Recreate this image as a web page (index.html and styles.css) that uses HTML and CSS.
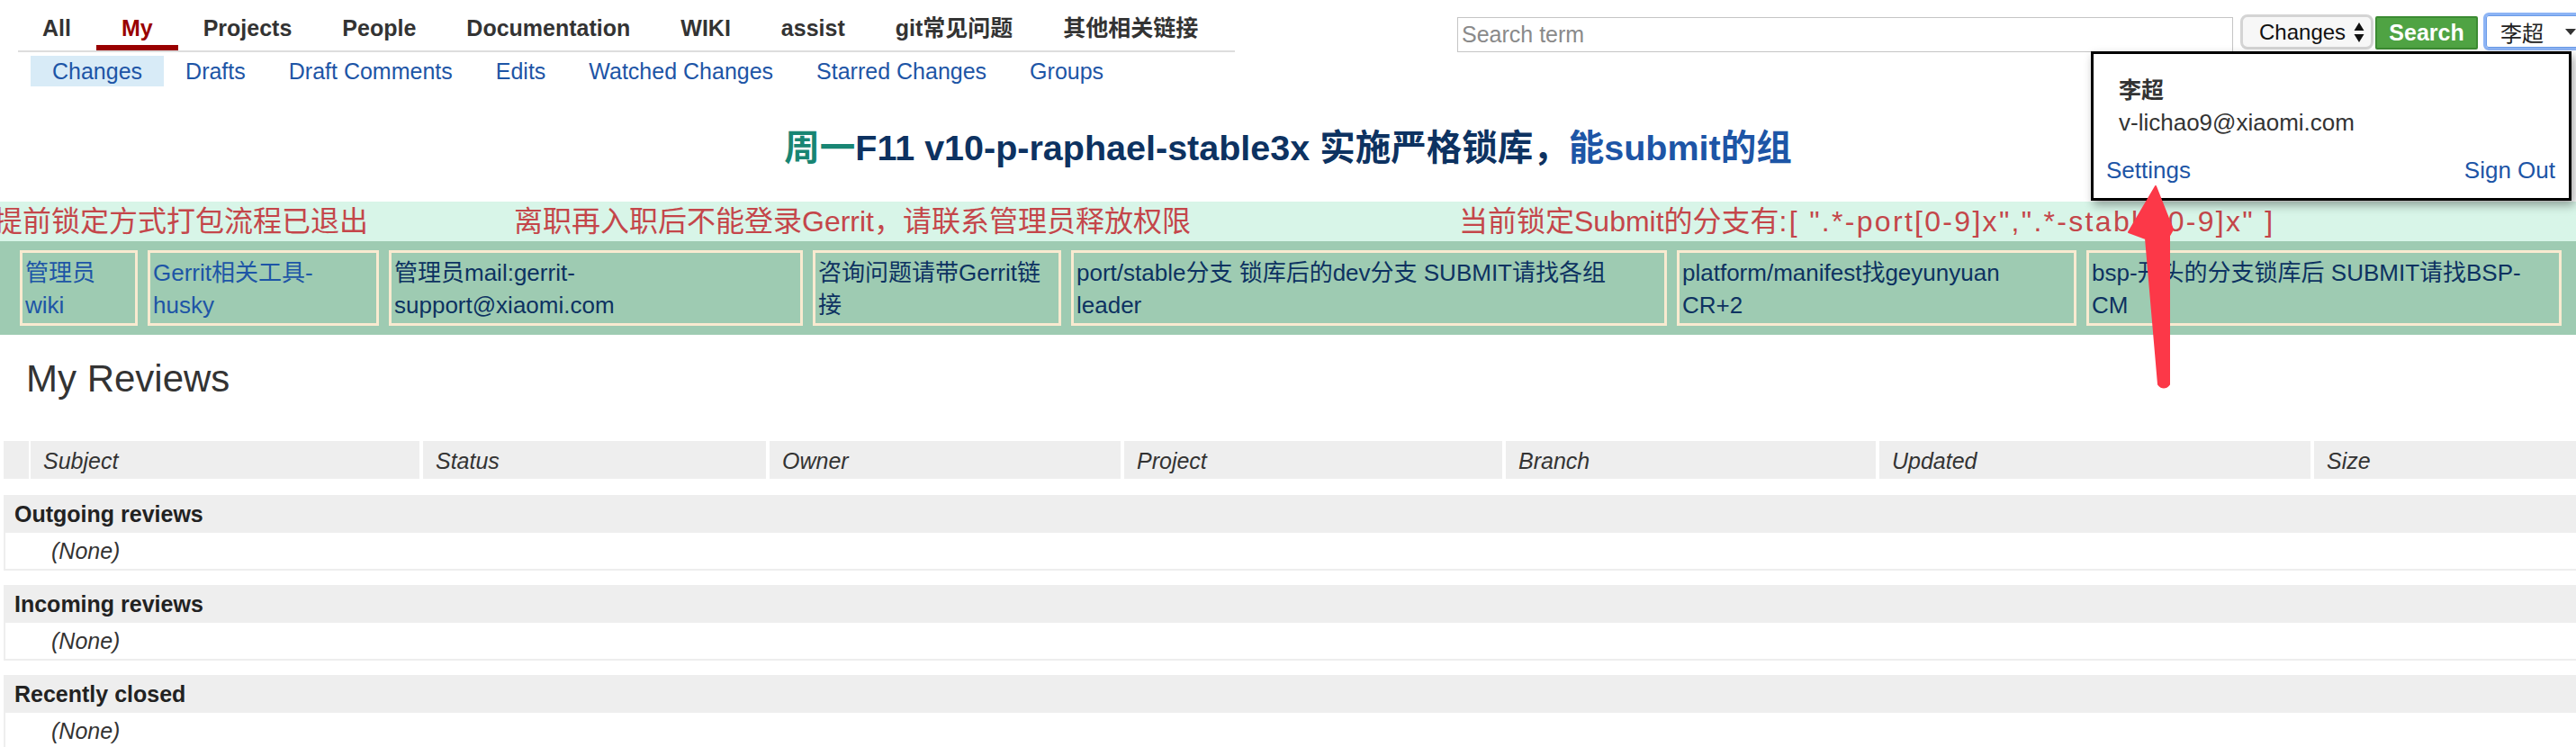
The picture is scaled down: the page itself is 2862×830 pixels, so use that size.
FILE: index.html
```html
<!DOCTYPE html>
<html lang="zh">
<head>
<meta charset="utf-8">
<title>My Reviews</title>
<link rel="stylesheet" href="styles.css">
</head>
<body>
<header class="topbar">
  <nav class="nav">
    <ul class="menu">
      <li class="menu-item">All</li>
      <li class="menu-item active">My</li>
      <li class="menu-item">Projects</li>
      <li class="menu-item">People</li>
      <li class="menu-item">Documentation</li>
      <li class="menu-item">WIKI</li>
      <li class="menu-item">assist</li>
      <li class="menu-item">git常见问题</li>
      <li class="menu-item">其他相关链接</li>
    </ul>
    <ul class="submenu">
      <li class="sub-item current">Changes</li>
      <li class="sub-item">Drafts</li>
      <li class="sub-item">Draft Comments</li>
      <li class="sub-item">Edits</li>
      <li class="sub-item">Watched Changes</li>
      <li class="sub-item">Starred Changes</li>
      <li class="sub-item">Groups</li>
    </ul>
  </nav>
  <div class="search">
    <input class="search-input" type="text" placeholder="Search term">
    <div class="select">Changes<svg class="updown" width="12" height="22" viewBox="0 0 12 22"><path d="M6 0 L11.5 9 L0.5 9 Z M0.5 13 L11.5 13 L6 22 Z" fill="#111"/></svg></div>
    <button class="search-btn">Search</button>
    <div class="user-btn">李超<svg class="caret" width="12" height="7" viewBox="0 0 12 7"><path d="M0 0 L12 0 L6 7 Z" fill="#333"/></svg></div>
  </div>
</header>

<div class="title"><span class="t-teal">周一</span>F11 v10-p-raphael-stable3x 实施严格锁库，<span class="t-blue">能submit的组</span></div>

<div class="marquee">
  <span class="mq mq1">提前锁定方式打包流程已退出</span>
  <span class="mq mq2">离职再入职后不能登录Gerrit，请联系管理员释放权限</span>
  <span class="mq mq3">当前锁定Submit的分支有<span class="mq-code">:[ ".*-port[0-9]x",".*-stable[0-9]x" ]</span></span>
</div>

<div class="links">
  <div class="cell w1"><a class="lnk">管理员<br>wiki</a></div>
  <div class="cell w2"><a class="lnk">Gerrit相关工具-<br>husky</a></div>
  <div class="cell w3">管理员mail:gerrit-<br>support@xiaomi.com</div>
  <div class="cell w4">咨询问题请带Gerrit链<br>接</div>
  <div class="cell w5">port/stable分支 锁库后的dev分支 SUBMIT请找各组<br>leader</div>
  <div class="cell w6">platform/manifest找geyunyuan<br>CR+2</div>
  <div class="cell w7">bsp-开头的分支锁库后 SUBMIT请找BSP-<br>CM</div>
</div>

<h1 class="heading">My Reviews</h1>

<div class="changes">
  <div class="thead">
    <div class="th"></div>
    <div class="th">Subject</div>
    <div class="th">Status</div>
    <div class="th">Owner</div>
    <div class="th">Project</div>
    <div class="th">Branch</div>
    <div class="th">Updated</div>
    <div class="th">Size</div>
  </div>
  <div class="section">
    <div class="sec-head">Outgoing reviews</div>
    <div class="sec-none">(None)</div>
  </div>
  <div class="section">
    <div class="sec-head">Incoming reviews</div>
    <div class="sec-none">(None)</div>
  </div>
  <div class="section">
    <div class="sec-head">Recently closed</div>
    <div class="sec-none">(None)</div>
  </div>
</div>

<div class="dropdown">
  <div class="dd-name">李超</div>
  <div class="dd-email">v-lichao9@xiaomi.com</div>
  <div class="dd-actions"><a class="dd-link">Settings</a><a class="dd-link">Sign Out</a></div>
</div>

<svg class="arrow" width="80" height="240" viewBox="0 0 80 240">
  <path d="M45 7 L15 58 L34 65 L48 227 Q54 234 60 227 L60 62 L64 55 Z" fill="#fc3848" stroke="#fc3848" stroke-width="2" stroke-linejoin="round"/>
</svg>
</body>
</html>
```

FILE: styles.css
```css
* { box-sizing: border-box; }
html, body { margin: 0; padding: 0; }
body {
  position: relative;
  width: 2862px;
  height: 830px;
  overflow: hidden;
  background: #fff;
  color: #333;
  font-family: "Liberation Sans", "Noto Sans CJK SC", sans-serif;
}

/* top bar */
.topbar { display: flex; height: 96px; }
.nav { flex: 0 0 1619px; }
.menu {
  list-style: none;
  margin: 0 0 0 20px;
  padding: 12px 0 0;
  width: 1352px;
  display: flex;
  border-bottom: 2px solid #ddd;
}
.menu-item {
  padding: 0 28px;
  font-size: 25px;
  font-weight: bold;
  line-height: 38px;
  color: #333;
  border-bottom: 6px solid transparent;
  white-space: nowrap;
}
.menu-item:first-child { padding-left: 27px; }
.menu-item.active { color: #990000; border-bottom-color: #990000; }

.submenu {
  list-style: none;
  margin: 4px 0 0 34px;
  padding: 0;
  display: flex;
}
.sub-item {
  padding: 0 24px;
  font-size: 25px;
  line-height: 34px;
  color: #1d55a6;
  white-space: nowrap;
}
.sub-item.current { background: #d8ebf7; }

.search { display: flex; align-items: flex-start; flex: 0 0 auto; }
.search-input {
  margin: 19px 0 0;
  width: 862px;
  height: 39px;
  border: 1px solid #c5c5c5;
  padding: 0 4px;
  font-family: "Liberation Sans", sans-serif;
  font-size: 25px;
  color: #333;
  outline: none;
}
.search-input::placeholder { color: #8a8a8a; }
.select {
  margin: 16px 0 0 8px;
  width: 148px;
  height: 39px;
  border: 3px solid #d4d4d4;
  border-radius: 8px;
  background: #f7f7f7;
  display: flex;
  align-items: center;
  padding-left: 18px;
  gap: 9px;
  font-size: 24px;
  color: #111;
}
.search-btn {
  margin: 18px 0 0 2px;
  width: 114px;
  height: 37px;
  border: 2px solid #3b8b32;
  border-radius: 2px;
  background: #4fa343;
  color: #fff;
  font-family: "Liberation Sans", sans-serif;
  font-size: 25px;
  font-weight: bold;
  padding: 0;
}
.user-btn {
  margin: 14px 0 0 6px;
  width: 110px;
  height: 42px;
  border: 3px solid #8db4f5;
  border-radius: 6px;
  background: #fff;
  box-shadow: inset 0 0 0 1px #6a9be8;
  display: flex;
  align-items: center;
  padding-left: 16px;
  font-size: 24px;
  color: #222;
}
.caret { margin-left: 24px; }

/* title */
.title {
  margin-top: 43px;
  text-align: center;
  font-size: 39.5px;
  font-weight: bold;
  line-height: 50px;
  color: #0d3261;
  white-space: nowrap;
}
.t-teal { color: #188573; }
.t-blue { color: #1d55a6; }

/* marquee */
.marquee {
  margin-top: 35px;
  height: 44px;
  background: #d8f5e8;
  display: flex;
  align-items: center;
  font-size: 32px;
  line-height: 44px;
  color: #c4464a;
  white-space: nowrap;
  overflow: hidden;
}
.mq1 { flex: 0 0 578px; margin-left: -7px; }
.mq2 { flex: 0 0 1050px; }
.mq3 { flex: 0 0 auto; }
.mq-code { letter-spacing: 2.3px; }

/* links band */
.links {
  height: 104px;
  background: #9ecbb2;
  padding: 10px 0 0 22px;
  display: flex;
  align-items: flex-start;
  gap: 11px;
}
.cell {
  flex: 0 0 auto;
  height: 84px;
  border: 3px solid #f9ead0;
  padding: 4px 3px 0;
  font-size: 26px;
  line-height: 36px;
  color: #0d3261;
  white-space: nowrap;
  overflow: hidden;
}
.lnk { color: #1d55a6; text-decoration: none; }
.w1 { width: 131px; }
.w2 { width: 257px; }
.w3 { width: 460px; }
.w4 { width: 276px; }
.w5 { width: 662px; }
.w6 { width: 444px; }
.w7 { width: 528px; }

/* heading */
.heading {
  margin: 24px 0 0 29px;
  font-size: 42px;
  font-weight: normal;
  line-height: 50px;
  color: #333;
}

/* changes table */
.changes { margin: 44px 0 0 4px; }
.thead {
  display: grid;
  grid-template-columns: 26px 432px 381px 390px 420px 411px 479px 1fr;
  column-gap: 4px;
}
.th {
  height: 42px;
  background: #eee;
  padding: 3px 14px 0;
  font-size: 25px;
  font-style: italic;
  line-height: 39px;
  color: #333;
}
.section { margin-top: 18px; }
.section + .section { margin-top: 16px; }
.sec-head {
  height: 42px;
  background: #eee;
  padding-left: 12px;
  font-size: 25px;
  font-weight: bold;
  line-height: 42px;
  color: #222;
}
.sec-none {
  height: 42px;
  border-left: 2px solid #eee;
  border-bottom: 2px solid #eee;
  padding-left: 51px;
  font-size: 25px;
  font-style: italic;
  line-height: 40px;
  color: #333;
}

/* account dropdown */
.dropdown {
  position: absolute;
  left: 2323px;
  top: 57px;
  width: 534px;
  height: 166px;
  background: #fff;
  border: 3px solid #000;
  box-shadow: 3px 5px 10px rgba(0, 0, 0, 0.35);
  padding: 22px 15px 0 14px;
}
.dd-name {
  padding-left: 14px;
  font-size: 25px;
  font-weight: bold;
  line-height: 36px;
  color: #333;
}
.dd-email {
  padding-left: 14px;
  font-size: 26px;
  line-height: 36px;
  color: #333;
}
.dd-actions {
  margin-top: 17px;
  display: flex;
  justify-content: space-between;
  font-size: 26px;
  line-height: 36px;
}
.dd-link { color: #1d55a6; text-decoration: none; }

/* annotation arrow */
.arrow {
  position: absolute;
  left: 2350px;
  top: 200px;
  pointer-events: none;
}
```
